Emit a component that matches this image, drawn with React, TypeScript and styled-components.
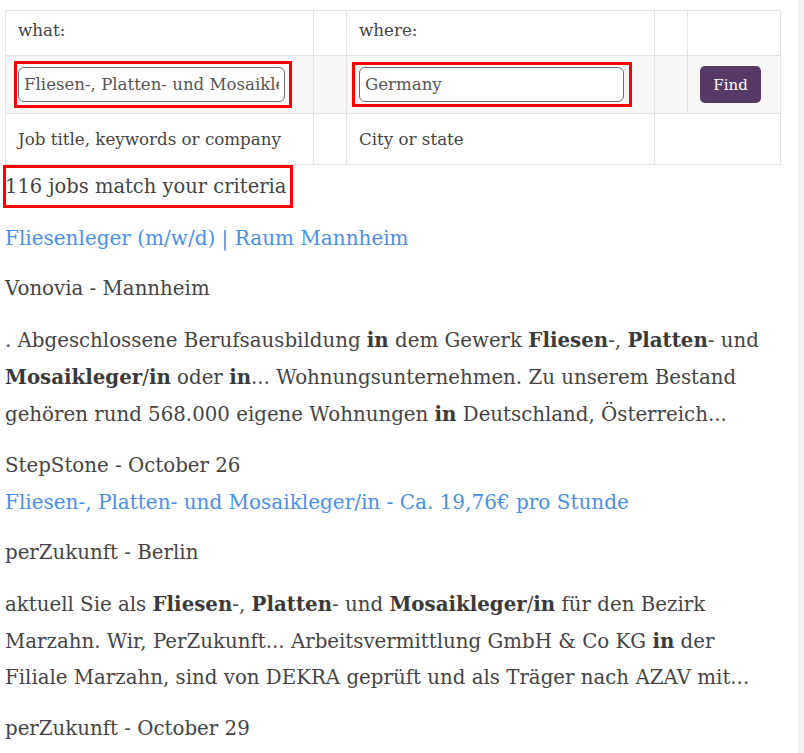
import React from "react";
import styled, { createGlobalStyle } from "styled-components";

const FONT = `"DejaVu Serif", "Liberation Serif", serif`;

const GlobalStyle = createGlobalStyle`
  html, body {
    margin: 0;
    padding: 0;
    height: 100%;
    overflow: hidden;
    background: #fff;
  }
  body {
    font-family: ${FONT};
    color: #444;
  }
`;

const PageContainer = styled.div`
  display: flex;
  height: 100vh;
  overflow: hidden;
`;

const Main = styled.div`
  flex: 1;
  padding: 10px 0 0 5px;
  min-width: 0;
`;

const ScrollStrip = styled.div`
  width: 6px;
  flex-shrink: 0;
  background: #f2f2f2;
`;

const SearchTable = styled.table`
  width: 775px;
  table-layout: fixed;
  border-collapse: collapse;
  font-size: 16.7px;
  color: #444;
`;

const Row = styled.tr<{ $shaded?: boolean; $h: number }>`
  height: ${(p) => p.$h}px;
  background: ${(p) => (p.$shaded ? "#f7f7f7" : "#fff")};
`;

const Cell = styled.td<{ $lift?: boolean }>`
  border: 1px solid #e3e3e3;
  padding: 0 0 ${(p) => (p.$lift ? "6px" : "0")} 12px;
  vertical-align: middle;
`;

const Highlight = styled.span<{ $inset: string }>`
  position: relative;
  display: inline-block;
  &::after {
    content: "";
    position: absolute;
    inset: ${(p) => p.$inset};
    border: 3px solid #f00;
    pointer-events: none;
  }
`;

const SearchInput = styled.input<{ $w: number }>`
  display: block;
  box-sizing: border-box;
  width: ${(p) => p.$w}px;
  height: 35px;
  padding: 0 5px;
  border: 1px solid #6f6f6f;
  border-radius: 6px;
  background: #fff;
  font-family: ${FONT};
  font-size: 16.6px;
  color: #555;
  outline: none;
`;

const FindButton = styled.button`
  width: 61px;
  height: 37px;
  border: none;
  border-radius: 5px;
  background: #553a67;
  color: #fff;
  font-family: ${FONT};
  font-size: 15px;
  cursor: pointer;
`;

const Results = styled.div`
  width: 775px;
  font-size: 19.8px;
  line-height: 36px;
`;

const Count = styled.p`
  margin: 4px 0 15px;
  font-size: 19.5px;
`;

const JobLink = styled.a`
  display: block;
  color: #4a8fe6;
  text-decoration: none;
  font-size: 20px;
`;

const Para = styled.p`
  margin: 15px 0;
  strong {
    font-weight: bold;
    color: #3a3a3a;
  }
`;

const SourceLine = styled.p`
  margin: 15px 0 0;
`;

type Job = {
  title: string;
  place: string;
  snippet: React.ReactNode;
  source: string;
};

const jobs: Job[] = [
  {
    title: "Fliesenleger (m/w/d) | Raum Mannheim",
    place: "Vonovia - Mannheim",
    snippet: (
      <>
        . Abgeschlossene Berufsausbildung <strong>in</strong> dem Gewerk{" "}
        <strong>Fliesen</strong>-, <strong>Platten</strong>- und{" "}
        <strong>Mosaikleger</strong>/<strong>in</strong> oder{" "}
        <strong>in</strong>... Wohnungsunternehmen. Zu unserem Bestand gehören
        rund 568.000 eigene Wohnungen <strong>in</strong> Deutschland,
        Österreich...
      </>
    ),
    source: "StepStone - October 26",
  },
  {
    title: "Fliesen-, Platten- und Mosaikleger/in - Ca. 19,76€ pro Stunde",
    place: "perZukunft - Berlin",
    snippet: (
      <>
        aktuell Sie als <strong>Fliesen</strong>-, <strong>Platten</strong>- und{" "}
        <strong>Mosaikleger</strong>/<strong>in</strong> für den Bezirk
        Marzahn. Wir, PerZukunft... Arbeitsvermittlung GmbH &amp; Co KG{" "}
        <strong>in</strong> der Filiale Marzahn, sind von DEKRA geprüft und als
        Träger nach AZAV mit...
      </>
    ),
    source: "perZukunft - October 29",
  },
  {
    title: "Fliesenleger / Plattenleger (m/w/d) in Vollzeit",
    place: "",
    snippet: null,
    source: "",
  },
];

export default function App() {
  return (
    <PageContainer>
      <GlobalStyle />
      <Main>
        <SearchTable>
          <colgroup>
            <col style={{ width: 308 }} />
            <col style={{ width: 33 }} />
            <col style={{ width: 308 }} />
            <col style={{ width: 33 }} />
            <col style={{ width: 93 }} />
          </colgroup>
          <tbody>
            <Row $h={45}>
              <Cell $lift>what:</Cell>
              <Cell />
              <Cell $lift>where:</Cell>
              <Cell />
              <Cell />
            </Row>
            <Row $h={58} $shaded>
              <Cell>
                <Highlight $inset="-6px -7px -6px -4px">
                  <SearchInput
                    $w={267}
                    defaultValue="Fliesen-, Platten- und Mosaikleger/in"
                  />
                </Highlight>
              </Cell>
              <Cell />
              <Cell>
                <Highlight $inset="-5px -8px -5px -7px">
                  <SearchInput $w={265} defaultValue="Germany" />
                </Highlight>
              </Cell>
              <Cell />
              <Cell>
                <FindButton>Find</FindButton>
              </Cell>
            </Row>
            <Row $h={51}>
              <Cell>Job title, keywords or company</Cell>
              <Cell />
              <Cell>City or state</Cell>
              <Cell colSpan={2} />
            </Row>
          </tbody>
        </SearchTable>

        <Results>
          <Count>
            <Highlight $inset="-4px -7px -3px -2px">
              116 jobs match your criteria
            </Highlight>
          </Count>
          {jobs.map((job, i) => (
            <React.Fragment key={i}>
              <JobLink href="#">{job.title}</JobLink>
              {job.place && <Para>{job.place}</Para>}
              {job.snippet && <Para>{job.snippet}</Para>}
              {job.source && <SourceLine>{job.source}</SourceLine>}
            </React.Fragment>
          ))}
        </Results>
      </Main>
      <ScrollStrip />
    </PageContainer>
  );
}
